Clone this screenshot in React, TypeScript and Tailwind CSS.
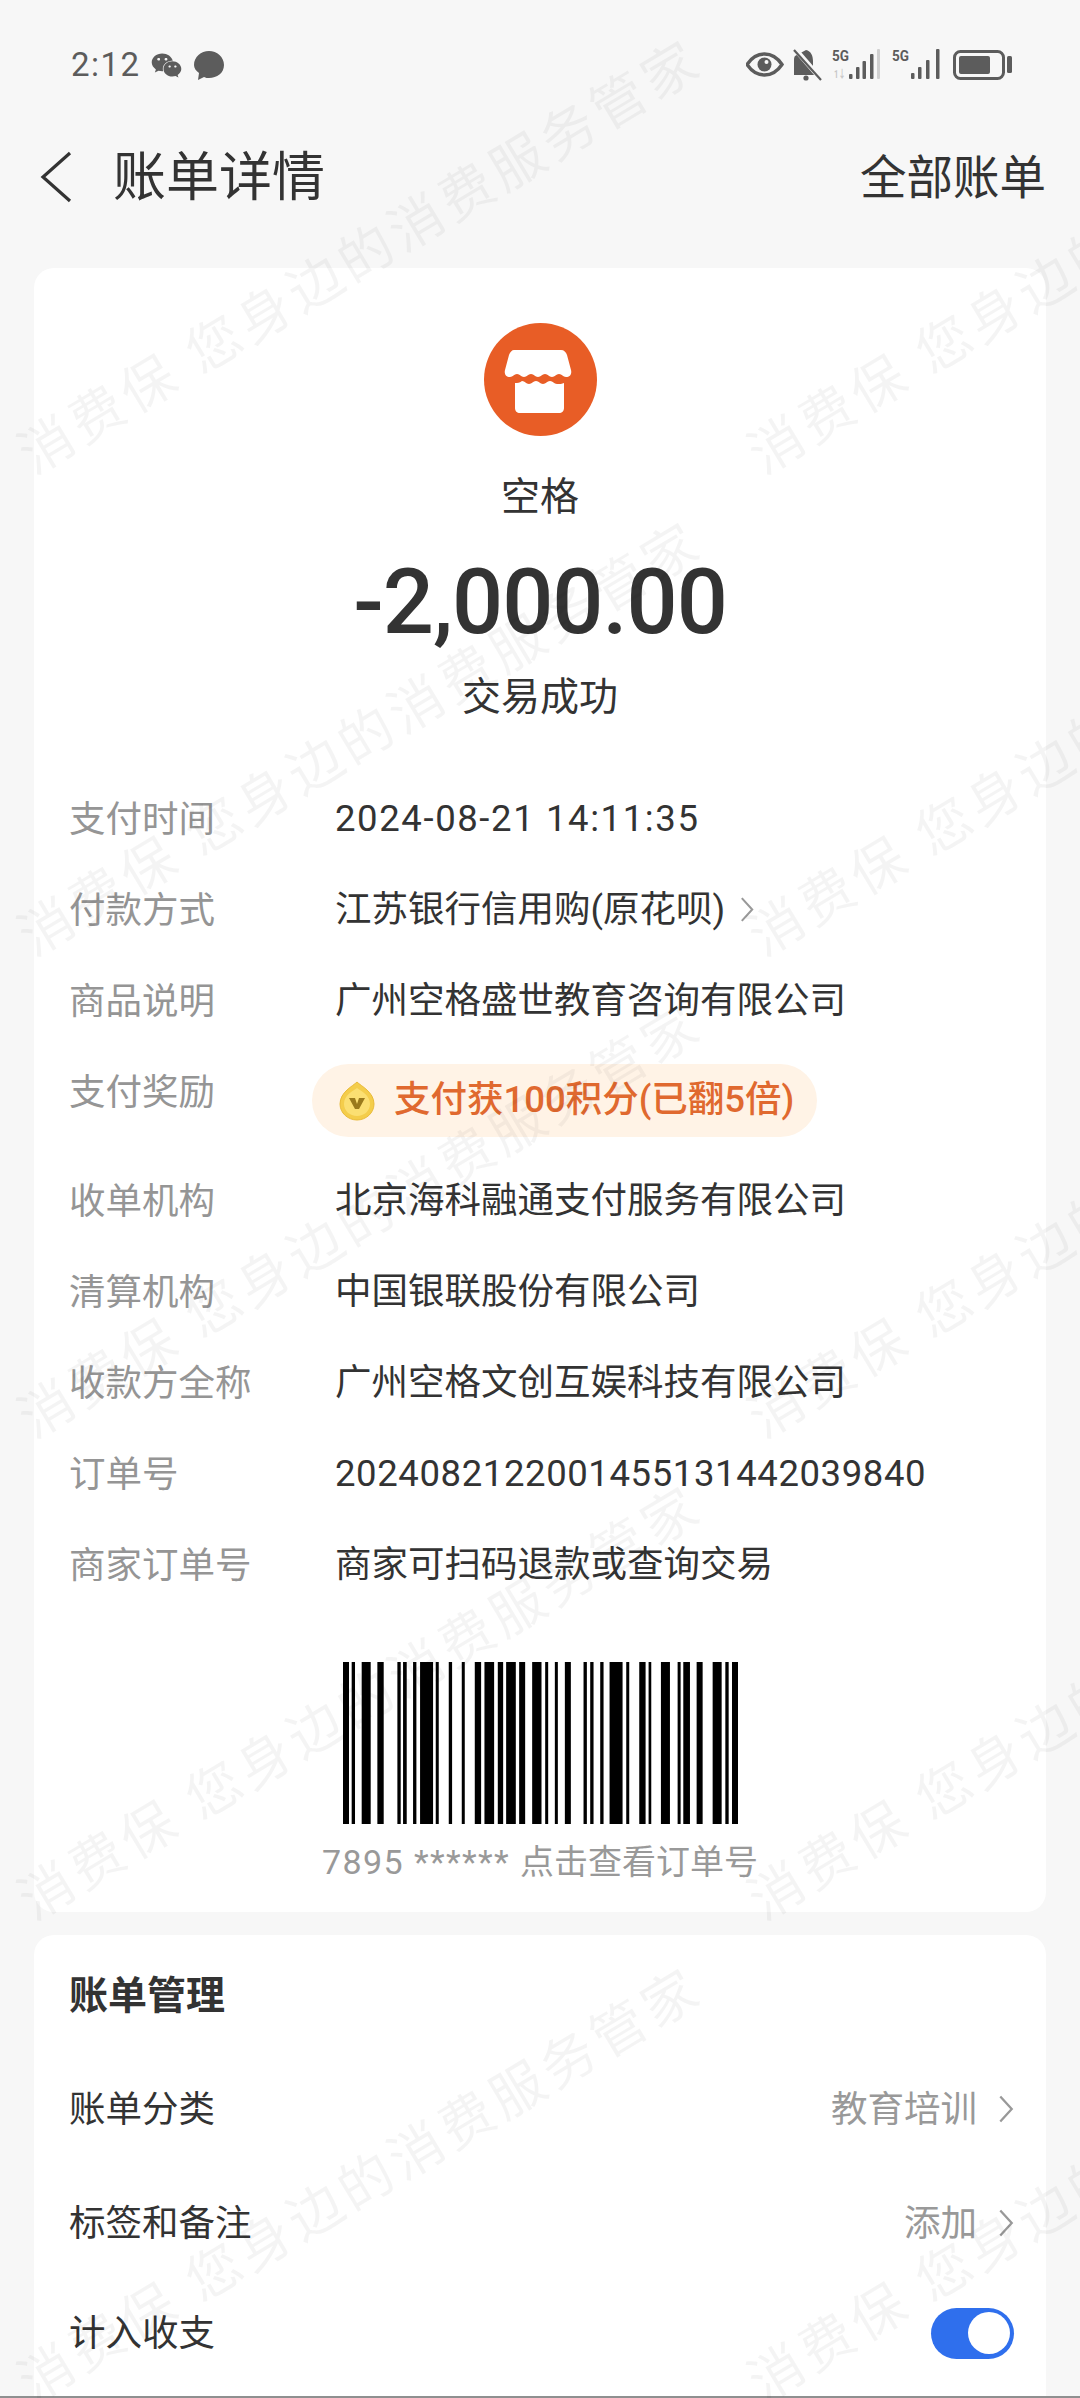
import { FaWeixin } from "react-icons/fa";

const font = { fontFamily: '"Roboto", "Noto Sans CJK SC", sans-serif' };

const barcode = [
  [132, 150], [158, 168], [188, 215], [235, 254], [295, 305], [312, 323], [342, 352], [363, 402], [410, 419],
  [449, 459], [488, 497], [527, 546], [556, 585], [596, 612], [621, 650], [660, 678], [699, 727], [738, 747],
  [767, 776], [797, 815], [853, 863], [873, 883], [903, 913], [931, 970], [981, 990], [1020, 1039], [1048, 1056],
  [1085, 1112], [1135, 1144], [1152, 1172], [1192, 1210], [1240, 1267], [1278, 1288], [1298, 1316],
];

const watermarks = [460, 942, 1424, 1906, 2388].flatMap((y) => [
  { x: 24, y },
  { x: 754, y },
]);

function Chevron({ className }: { className: string }) {
  return (
    <svg viewBox="0 0 14 26" className={className} fill="none" stroke="currentColor" strokeWidth="2">
      <path d="M2 2l10 11L2 24" />
    </svg>
  );
}

function StatusIcons() {
  const c = "#5c5c5c";
  return (
    <svg width="266" height="36" viewBox="0 0 266 36" style={font}>
      {/* eye */}
      <path d="M1 17.5C6 10 12 7 18.5 7S31 10 36 17.5C31 25 25 28 18.5 28S6 25 1 17.5Z" fill="none" stroke={c} strokeWidth="3.4" />
      <circle cx="18.5" cy="17.5" r="7" fill={c} />
      <circle cx="20.5" cy="15" r="2" fill="#f7f7f7" />
      {/* muted bell */}
      <path d="M62 3c5 1 7 6 7 11v9l5 5H50V14c0-2 0-4 1-5Z" fill={c} transform="translate(-2 0)" />
      <circle cx="60" cy="31" r="2.6" fill={c} />
      <path d="M49 2l26 30" stroke="#f7f7f7" strokeWidth="5" />
      <path d="M48 3l27 30" stroke={c} strokeWidth="2.2" />
      {/* first signal */}
      <text x="86" y="14" fontSize="15" fontWeight="700" fill={c} textLength="17" lengthAdjust="spacingAndGlyphs">5G</text>
      <text x="88" y="31" fontSize="11" fontWeight="700" fill="#c8c8c8" textLength="12" lengthAdjust="spacingAndGlyphs">1↓</text>
      <rect x="103" y="27" width="3.5" height="5" rx="1" fill={c} />
      <rect x="110" y="20" width="3.5" height="12" rx="1" fill={c} />
      <rect x="116.5" y="14" width="3.5" height="18" rx="1" fill={c} />
      <rect x="124" y="7" width="3.5" height="25" rx="1" fill={c} />
      <rect x="131" y="2" width="3" height="30" rx="1" fill="#d0d0d0" />
      {/* second signal */}
      <text x="146" y="14" fontSize="15" fontWeight="700" fill={c} textLength="17" lengthAdjust="spacingAndGlyphs">5G</text>
      <rect x="165" y="26" width="3.5" height="6" rx="1" fill={c} />
      <rect x="172" y="20" width="3.5" height="12" rx="1" fill={c} />
      <rect x="180" y="13" width="3.5" height="19" rx="1" fill={c} />
      <rect x="190" y="2" width="3.5" height="30" rx="1" fill={c} />
      {/* battery */}
      <rect x="208.5" y="4.5" width="49" height="27" rx="6" fill="none" stroke={c} strokeWidth="3" />
      <rect x="213" y="9" width="31" height="18" rx="2" fill={c} />
      <rect x="261" y="9" width="5" height="17" rx="1.5" fill={c} />
    </svg>
  );
}

function StoreLogo() {
  return (
    <svg width="113" height="113" viewBox="0 0 113 113">
      <circle cx="56.5" cy="56.5" r="56.5" fill="#e85d26" />
      <path
        d="M36 27H77c3 0 5 2 6 5l4 15c1 4-1 7-5 7-3 0-4-3-7-3s-4 3-7 3-4-3-7-3-4 3-7 3-4-3-7-3-4 3-7 3-4-3-7-3-4 3-7 3c-4 0-6-3-5-7l4-15c1-3 3-5 5-5Z"
        fill="#fff"
      />
      <path
        d="M31 60c3 0 4 0 7-2 3 0 4 3 7 3s4-3 7-3 4 3 7 3 4-3 7-3 4 3 7 3c3 0 5 0 7-1v25c0 3-2 5-5 5H36c-3 0-5-2-5-5Z"
        fill="#fff"
      />
    </svg>
  );
}

function Coin() {
  return (
    <svg width="36" height="40" viewBox="0 0 36 40">
      <path d="M18 1C22 5 35 11 35 23c0 9-8 16-17 16S1 32 1 23C1 11 14 5 18 1Z" fill="#f4cd4b" stroke="#e9bb3a" />
      <path d="M18 7C22 10 31 14 31 23c0 7-6 12-13 12S5 30 5 23C5 14 14 10 18 7Z" fill="#fbdf72" />
      <path d="M10 17h6l2 6 2-6h6l-6 11h-4Z" fill="#9a7a1c" />
    </svg>
  );
}

function Row({ label, children }: { label: string; children: React.ReactNode }) {
  return (
    <div className="flex items-start mb-[37px]">
      <div className="w-[266px] shrink-0 h-[54px] leading-[57px] text-[36.5px] text-[#959595]">{label}</div>
      <div className="h-[54px] leading-[57px] text-[36.5px] text-[#333333] whitespace-nowrap flex items-center">{children}</div>
    </div>
  );
}

export default function App() {
  return (
    <div className="relative w-[1080px] h-[2398px] overflow-hidden bg-[#f7f7f7]" style={font}>
      {/* status bar */}
      <div className="h-[130px] flex items-center justify-between pl-[71px] pr-[68px]">
        <div className="flex items-center text-[#5c5c5c]">
          <span className="text-[33px] tracking-[1.5px] w-[80px]">2:12</span>
          <FaWeixin className="w-[31px] h-[31px]" />
          <svg width="32" height="32" viewBox="0 0 32 32" className="ml-[11px]">
            <path d="M16 2c8 0 15 6 15 14s-7 13-15 13c-2 0-3 0-5-1l-6 3 1-7C3 22 1 19 1 16 1 8 8 2 16 2Z" fill="#5c5c5c" />
          </svg>
        </div>
        <StatusIcons />
      </div>

      {/* nav */}
      <div className="h-[94px] flex items-center justify-between pl-[40px] pr-[34px]">
        <div className="flex items-center">
          <svg width="32" height="52" viewBox="0 0 32 52" fill="none" stroke="#333333" strokeWidth="3.2">
            <path d="M30 2L3 26l27 24" />
          </svg>
          <span className="ml-[41px] mt-[4px] text-[53px] text-[#333333]">账单详情</span>
        </div>
        <span className="mt-[3px] text-[46.5px] text-[#333333]">全部账单</span>
      </div>

      {/* bill card */}
      <div className="mt-[44px] mx-[34px] h-[1644px] bg-white rounded-[20px] flex flex-col">
        <div className="pt-[55px] flex flex-col items-center">
          <StoreLogo />
          <div className="mt-[29px] h-[60px] leading-[64px] text-[39px] text-[#333333]">空格</div>
          <div className="mt-[25px] h-[100px] leading-[105px] text-[90px] tracking-[-1px] font-medium text-[#333333]">-2,000.00</div>
          <div className="mt-[17px] h-[60px] leading-[60px] text-[39px] text-[#333333]">交易成功</div>
        </div>

        <div className="mt-[64px] pl-[35px]">
          <Row label="支付时间"><span className="tracking-[1.6px]">2024-08-21 14:11:35</span></Row>
          <Row label="付款方式">
            江苏银行信用购(原花呗)
            <Chevron className="ml-[14px] w-[16px] h-[27px] text-[#999999]" />
          </Row>
          <Row label="商品说明">广州空格盛世教育咨询有限公司</Row>
          <div className="flex items-start mb-[36px]">
            <div className="w-[266px] shrink-0 h-[54px] leading-[57px] text-[36.5px] text-[#959595]">支付奖励</div>
            <div className="-ml-[23px] w-[505px] h-[73px] rounded-full bg-[#fff3e6] flex items-center pl-[27px]">
              <Coin />
              <span className="ml-[19px] text-[36.5px] font-medium text-[#e0692f] whitespace-nowrap">支付获100积分(已翻5倍)</span>
            </div>
          </div>
          <Row label="收单机构">北京海科融通支付服务有限公司</Row>
          <Row label="清算机构">中国银联股份有限公司</Row>
          <Row label="收款方全称">广州空格文创互娱科技有限公司</Row>
          <Row label="订单号"><span className="tracking-[0.6px]">2024082122001455131442039840</span></Row>
          <Row label="商家订单号">商家可扫码退款或查询交易</Row>
        </div>

        <div className="mt-[34px] flex flex-col items-center">
          <svg width="395" height="162" viewBox="132 0 1184 486" preserveAspectRatio="none">
            {barcode.map(([a, b]) => (
              <rect key={a} x={a} y="0" width={b - a} height="486" fill="#000000" />
            ))}
          </svg>
          <div className="mt-[11px] h-[50px] leading-[54px] text-[34px] text-[#999999] whitespace-nowrap">
            <span className="tracking-[1.4px]">7895 ****** </span>点击查看订单号
          </div>
        </div>
      </div>

      {/* manage card */}
      <div className="mt-[23px] mx-[34px] h-[463px] bg-white rounded-t-[20px] pt-[32px] pl-[35px] pr-[32px]">
        <div className="h-[56px] leading-[59px] text-[39px] font-bold text-[#333333]">账单管理</div>
        <div className="mt-[58px] h-[56px] leading-[59px] flex items-center justify-between text-[36.5px]">
          <span className="text-[#333333]">账单分类</span>
          <div className="flex items-center text-[#999999]">
            教育培训
            <Chevron className="ml-[21px] w-[16px] h-[30px]" />
          </div>
        </div>
        <div className="mt-[58px] h-[56px] leading-[59px] flex items-center justify-between text-[36.5px]">
          <span className="text-[#333333]">标签和备注</span>
          <div className="flex items-center text-[#999999]">
            添加
            <Chevron className="ml-[21px] w-[16px] h-[30px]" />
          </div>
        </div>
        <div className="mt-[54px] h-[56px] leading-[59px] flex items-center justify-between text-[36.5px]">
          <span className="text-[#333333]">计入收支</span>
          <div className="w-[83px] h-[51px] rounded-full bg-[#2f6fed] flex items-center justify-end pr-[4px]">
            <div className="w-[42px] h-[42px] rounded-full bg-white" />
          </div>
        </div>
      </div>

      {/* bottom edge */}
      <div className="absolute left-0 right-0 bottom-0 h-[2px] bg-[#8f8f8f]" />

      {/* watermark */}
      <div className="absolute inset-0 pointer-events-none">
        {watermarks.map((w) => (
          <div
            key={`${w.x}-${w.y}`}
            className="absolute origin-left whitespace-nowrap text-[54px] leading-[60px] tracking-[5px] text-black/[0.045] -rotate-[31deg]"
            style={{ left: w.x, top: w.y - 30 }}
          >
            消费保 您身边的消费服务管家
          </div>
        ))}
      </div>
    </div>
  );
}
